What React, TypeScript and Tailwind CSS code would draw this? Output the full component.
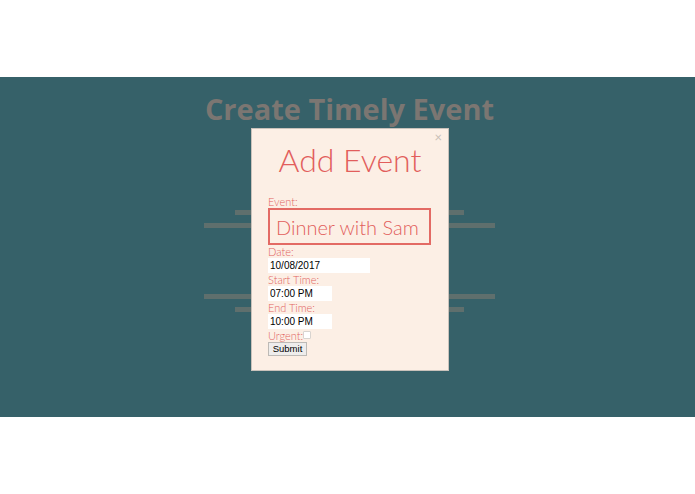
export default function App() {
  return (
    <div className="min-h-screen bg-white font-['Lato',sans-serif]">
      <div className="h-[77px]" />

      {/* Hero band */}
      <section className="relative h-[340px] bg-[#366169] pl-[4px] flex flex-col items-center">
        <h1 className="mt-[12px] text-[29px] leading-[39px] font-bold text-[#7b7672] font-['Open_Sans',sans-serif]">
          Create Timely Event
        </h1>

        {/* Background stripes */}
        <div className="mt-[82px] h-[5px] w-[229px] bg-[#5f6f6d]" />
        <div className="mt-[8px] h-[5px] w-[291px] bg-[#5f6f6d]" />
        <div className="mt-[66px] h-[5px] w-[291px] bg-[#5f6f6d]" />
        <div className="mt-[8px] h-[5px] w-[229px] bg-[#5f6f6d]" />

        {/* Modal */}
        <div className="absolute left-[251px] top-[51px] w-[198px] h-[243px] bg-[#fcefe5] border border-[#c9c2bb] px-[16px] pt-[11px]">
          <button className="absolute right-[6px] top-[2px] text-[13px] leading-none text-[#c9bfb8]">×</button>
          <h2 className="text-center text-[32px] font-light leading-[normal] text-[#e25e5c]">Add Event</h2>

          <form className="mt-[16px] flex flex-col items-start text-[11px] font-light text-[#e2645f]">
            <label className="leading-[13px]">Event:</label>
            <input
              defaultValue="Dinner with Sam"
              className="w-[163px] h-[37px] border-2 border-[#e36a64] bg-transparent px-[6px] pt-[1px] text-[20px] font-light text-[#e25e5c] outline-none"
            />
            <label className="leading-[13px]">Date:</label>
            <input
              defaultValue="10/08/2017"
              className="w-[102px] h-[15px] bg-white px-[2px] text-[10px] font-normal text-black font-['Liberation_Sans',sans-serif] outline-none"
            />
            <label className="leading-[13px]">Start Time:</label>
            <input
              defaultValue="07:00 PM"
              className="w-[64px] h-[15px] bg-white px-[2px] text-[10px] font-normal text-black font-['Liberation_Sans',sans-serif] outline-none"
            />
            <label className="leading-[13px]">End Time:</label>
            <input
              defaultValue="10:00 PM"
              className="w-[64px] h-[15px] bg-white px-[2px] text-[10px] font-normal text-black font-['Liberation_Sans',sans-serif] outline-none"
            />
            <div className="flex items-center leading-[13px]">
              <span>Urgent:</span>
              <span className="mt-[-2px] h-[8px] w-[8px] bg-white border border-[#d8d4d0] rounded-[1px]" />
            </div>
            <button
              type="button"
              className="h-[14px] w-[39px] border border-[#bdbab6] bg-[#eeedec] text-[9.5px] leading-none text-black font-['Liberation_Sans',sans-serif]"
            >
              Submit
            </button>
          </form>
        </div>
      </section>
    </div>
  );
}
